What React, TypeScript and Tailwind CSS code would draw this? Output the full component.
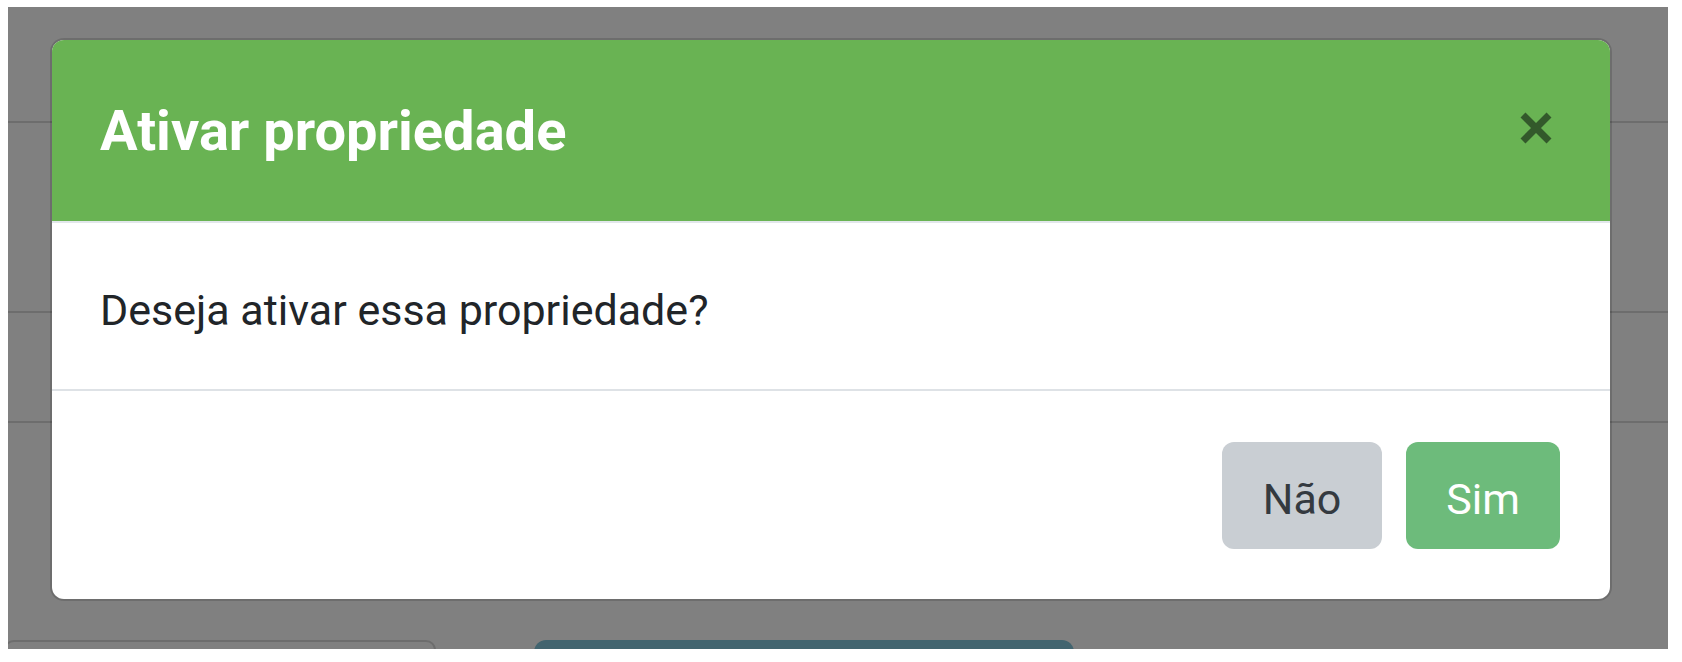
import React from "react";

function CloseIcon() {
  return (
    <svg width="34" height="34" viewBox="0 0 34 34" aria-hidden="true">
      <path d="M4 4 L30 30 M30 4 L4 30" stroke="#33592b" strokeWidth="7" strokeLinecap="butt" fill="none" />
    </svg>
  );
}

function BackdropPage() {
  return (
    <div className="flex flex-col h-full">
      <div className="h-[116px] shrink-0 border-b-2 border-[#6d6d6d]" />
      <div className="h-[190px] shrink-0 border-b-2 border-[#6d6d6d]" />
      <div className="h-[110px] shrink-0 border-b-2 border-[#6d6d6d]" />
      <div className="mt-[217px] shrink-0 flex items-start">
        <div className="w-[432px] h-[40px] -ml-[4px] border-2 border-[#6d6d6d] rounded-[10px]" />
        <div className="ml-[98px] w-[540px] h-[40px] rounded-t-[12px] bg-[#42646f]" />
      </div>
    </div>
  );
}

function ConfirmModal() {
  return (
    <div className="absolute left-[44px] top-[33px] w-[1558px] h-[559px] flex flex-col bg-white rounded-[12px] overflow-hidden ring-2 ring-black/15 font-['Roboto',sans-serif]">
      <div className="h-[183px] shrink-0 flex items-center justify-between pl-[48px] pr-[57px] bg-[#69b353] border-b-2 border-[#e2e7eb]">
        <h5 className="text-[56px] font-bold text-white leading-none">Ativar propriedade</h5>
        <button className="-mt-[6px]">
          <CloseIcon />
        </button>
      </div>
      <div className="h-[168px] shrink-0 flex items-center px-[48px] border-b-2 border-[#dee2e6]">
        <p className="text-[43px] text-[#212529] leading-none pt-[9px]">Deseja ativar essa propriedade?</p>
      </div>
      <div className="flex-1 flex items-center justify-end gap-[24px] pr-[50px]">
        <button className="w-[160px] h-[107px] pt-[8px] rounded-[12px] bg-[#c9ced3] text-[43px] text-[#343a40]">
          Não
        </button>
        <button className="w-[154px] h-[107px] pt-[8px] rounded-[12px] bg-[#6dbb7b] text-[43px] text-white">
          Sim
        </button>
      </div>
    </div>
  );
}

export default function App() {
  return (
    <div className="w-[1682px] h-[662px] bg-white pt-[7px] pl-[8px]">
      <div className="relative w-[1660px] h-[642px] bg-[#808080] overflow-hidden">
        <BackdropPage />
        <ConfirmModal />
      </div>
    </div>
  );
}
